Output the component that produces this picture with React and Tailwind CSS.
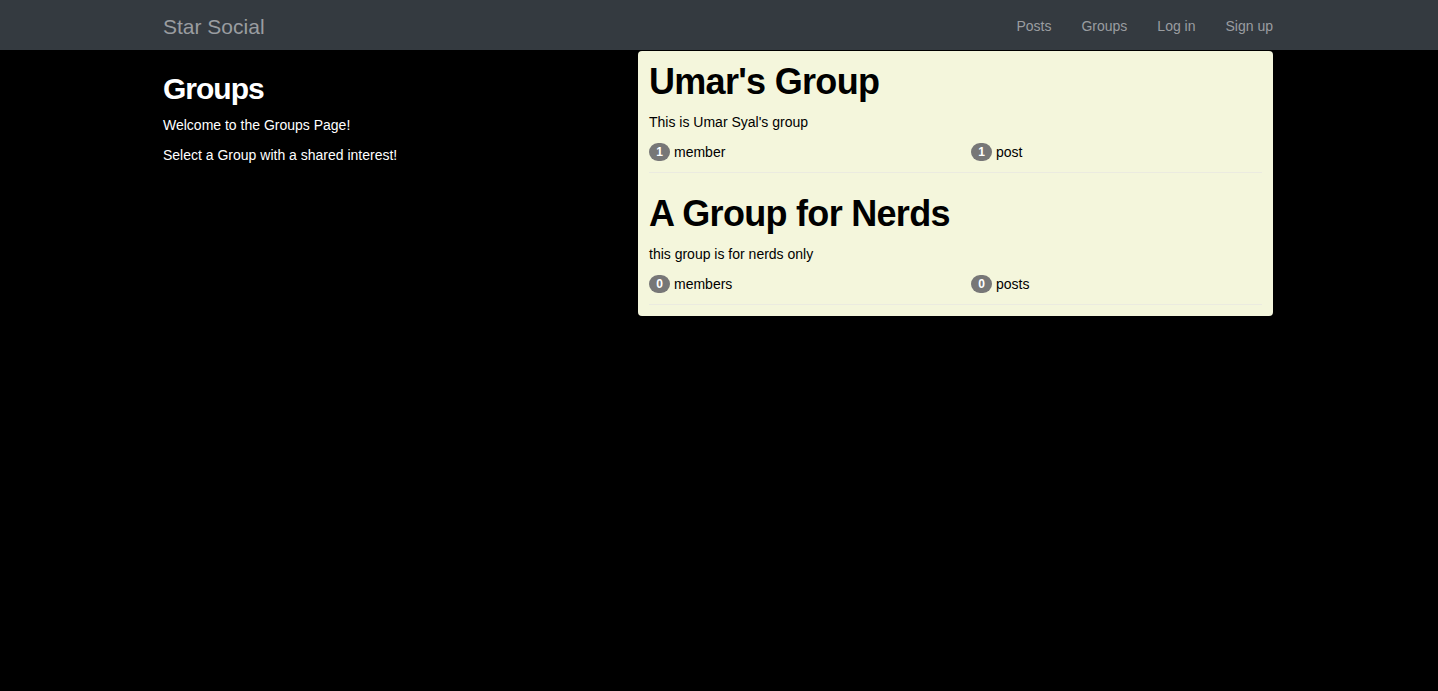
import React from 'react';

const groups = [
    { name: "Umar's Group", description: "This is Umar Syal's group", members: 1, posts: 1 },
    { name: 'A Group for Nerds', description: 'this group is for nerds only', members: 0, posts: 0 },
];

const Badge = ({ count }) => (
    <span className="inline-flex items-center justify-center h-[18px] min-w-[21px] px-[7px] rounded-[10px] bg-[#777777] text-white text-[12px] font-bold leading-none">
        {count}
    </span>
);

const Navbar = () => (
    <nav className="h-[50px] bg-[#343a40]">
        <div className="mx-auto w-[1112px] pr-[2px] h-full flex items-center justify-between">
            <a href="#" className="text-[21px] text-[#9a9da0] leading-none pt-[2px]">Star Social</a>
            <ul className="flex items-center gap-[30px] text-[14px] text-[#9a9da0] pt-[2px]">
                <li><a href="#">Posts</a></li>
                <li><a href="#">Groups</a></li>
                <li><a href="#">Log in</a></li>
                <li><a href="#">Sign up</a></li>
            </ul>
        </div>
    </nav>
);

const GroupItem = ({ group, last }) => (
    <div className={last ? '' : 'mb-[21px]'}>
        <h1 className="text-[36px] leading-[40px] font-bold tracking-[-0.7px] mb-[10px]">{group.name}</h1>
        <p className="text-[14px] leading-[20px] mb-[10px]">{group.description}</p>
        <div className="flex h-[20px] items-center text-[14px]">
            <div className="w-[322px] flex items-center gap-[4px]">
                <Badge count={group.members} />
                <span>{group.members === 1 ? 'member' : 'members'}</span>
            </div>
            <div className="flex items-center gap-[4px]">
                <Badge count={group.posts} />
                <span>{group.posts === 1 ? 'post' : 'posts'}</span>
            </div>
        </div>
        <hr className="mt-[10px] border-0 border-t border-[#ebebe0]" />
    </div>
);

export default function App() {
    return (
        <div className="min-h-screen bg-black font-['Liberation_Sans',Arial,sans-serif]">
            <Navbar />
            <div className="mx-auto w-[1112px] pr-[2px] flex gap-[30px] items-start">
                {/* Intro */}
                <div className="w-[445px] text-white">
                    <h2 className="text-[30px] leading-[33px] font-bold tracking-[-1px] mt-[22px] mb-[10px]">Groups</h2>
                    <p className="text-[14px] leading-[20px] mb-[10px]">Welcome to the Groups Page!</p>
                    <p className="text-[14px] leading-[20px]">Select a Group with a shared interest!</p>
                </div>

                {/* Group list */}
                <div className="flex-1 mt-[1px] rounded-[4px] bg-[#f4f6dc] text-black px-[11px] pt-[11px] pb-[11px]">
                    {groups.map((g, i) => (
                        <GroupItem key={g.name} group={g} last={i === groups.length - 1} />
                    ))}
                </div>
            </div>
        </div>
    );
}
